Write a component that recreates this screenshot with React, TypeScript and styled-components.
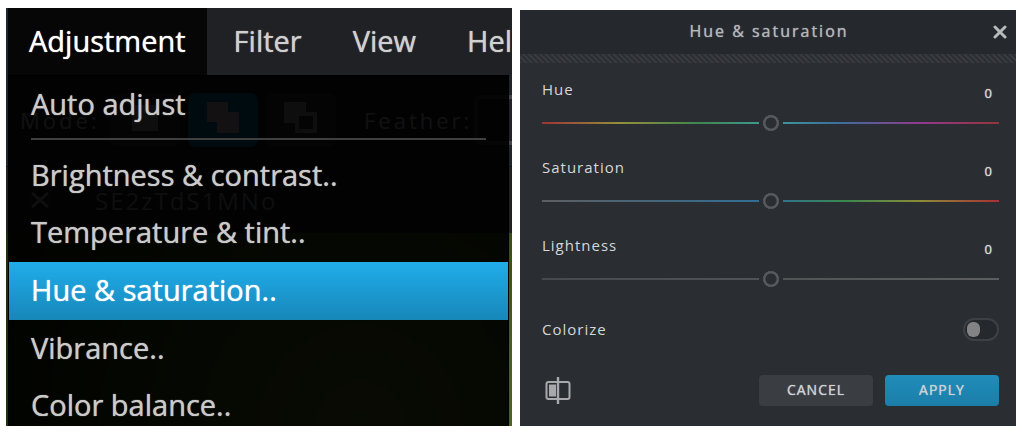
import React, { useState } from "react";
import styled, { createGlobalStyle } from "styled-components";

const GlobalStyle = createGlobalStyle`
  * { box-sizing: border-box; }
  body {
    margin: 0;
    background: #fff;
    font-family: "Open Sans", "Noto Sans", sans-serif;
  }
  button, input { font: inherit; letter-spacing: inherit; margin: 0; }
`;

const Page = styled.main`
  display: grid;
  grid-template-columns: 506fr 496fr;
  gap: 8px;
  padding: 8px 6px 6px;
`;

/* ---------- editor with the open menu ---------- */

const Editor = styled.section`
  position: relative;
  display: flex;
  flex-direction: column;
  min-width: 0;
  overflow: hidden;
  background: #20242c;
`;

const MenuBar = styled.nav`
  display: flex;
  flex: none;
  gap: 3px;
  height: 67px;
  background: #202125;
`;

const MenuTab = styled.button<{ $open?: boolean }>`
  flex: none;
  border: 0;
  border-left: ${(p) => (p.$open ? "2px solid #20242c" : "0")};
  padding: 0 ${(p) => (p.$open ? 21 : 24)}px 2px;
  font-size: 29px;
  line-height: 40px;
  white-space: nowrap;
  text-shadow: 0 0 1px currentColor;
  color: ${(p) => (p.$open ? "#fff" : "#d0d0d0")};
  background: ${(p) => (p.$open ? "#060606" : "transparent")};
`;

const ToolBar = styled.div`
  display: flex;
  align-items: center;
  flex: none;
  gap: 8px;
  height: 92px;
  padding: 0 0 2px 14px;
  border-bottom: 1px solid #14161a;
  font-size: 22px;
  letter-spacing: 3px;
  color: #d0d0d0;
  white-space: nowrap;
`;

const ToolLabel = styled.span<{ $wide?: boolean }>`
  flex: none;
  width: ${(p) => (p.$wide ? 102 : 82)}px;
  margin-left: ${(p) => (p.$wide ? 20 : 0)}px;
`;

const ModeButton = styled.button<{ $active?: boolean }>`
  display: grid;
  place-items: center;
  flex: none;
  width: 70px;
  height: 54px;
  padding: 0 0 4px;
  border: 0;
  border-radius: 8px;
  background: ${(p) => (p.$active ? "#0090c8" : "#34363c")};
`;

const FeatherInput = styled.input`
  flex: none;
  width: 90px;
  height: 50px;
  border: 4px solid #43464d;
  border-radius: 8px;
  background: #202329;
`;

const FileTab = styled.div`
  display: flex;
  align-items: center;
  flex: none;
  gap: 46px;
  height: 66px;
  padding-left: 25px;
  font-size: 24px;
  letter-spacing: 2px;
  color: #b0b0b0;
  background: #202125;
`;

const Canvas = styled.div`
  flex: 1;
  background: radial-gradient(circle at 70% 100%, #6b8a2c, #1e3008 90%);
`;

const Menu = styled.div`
  position: absolute;
  top: 67px;
  right: 3px;
  bottom: 0;
  left: 2px;
  overflow: hidden;
  border: 1px solid #000;
  border-bottom: 0;
  background: rgba(0, 0, 0, 0.92);
`;

const MenuItem = styled.button<{ $selected?: boolean }>`
  display: flex;
  align-items: center;
  width: 100%;
  height: ${(p) => (p.$selected ? 58 : 57)}px;
  margin: ${(p) => (p.$selected ? 1 : 0)}px 0 0;
  padding: 0 22px 2px;
  border: 0;
  font-size: 29px;
  line-height: 40px;
  text-align: left;
  white-space: nowrap;
  text-shadow: 0 0 1px currentColor;
  color: ${(p) => (p.$selected ? "#fff" : "#cacaca")};
  background: ${(p) =>
    p.$selected ? "linear-gradient(#20adea, #1787b9)" : "transparent"};
`;

const Separator = styled.hr`
  height: 2px;
  margin: 5px 22px 7px;
  border: 0;
  background: #404040;
`;

/* ---------- dialog ---------- */

const Dialog = styled.section`
  display: flex;
  flex-direction: column;
  min-width: 0;
  margin-top: 2px;
  background: #2a2d32;
  font-size: 15px;
  line-height: 20px;
  letter-spacing: 1px;
  color: #d6d7d8;
`;

const Header = styled.header`
  display: grid;
  grid-template-columns: 34px 1fr 32px;
  align-items: center;
  height: 44px;
  background: #25282d;
`;

const Title = styled.h2`
  grid-column: 2;
  margin: 0;
  padding-bottom: 2px;
  font-size: 16px;
  font-weight: 400;
  letter-spacing: 2px;
  text-align: center;
  text-shadow: 0 0 1px currentColor;
  color: #b4b6b8;
`;

const Close = styled.button`
  display: grid;
  place-items: center;
  height: 36px;
  padding: 0;
  border: 0;
  background: transparent;
  color: #b8b9bb;
`;

const Stripes = styled.div`
  height: 9px;
  background: repeating-linear-gradient(
    45deg,
    #393b3f 0 1px,
    #2a2d32 2px 3px,
    #393b3f 4px
  );
`;

const Body = styled.div`
  display: flex;
  flex-direction: column;
  padding: 16px 17px 20px 22px;
`;

const Field = styled.div`
  display: grid;
  grid-template-columns: 1fr auto;
  align-content: start;
  height: 78px;
`;

const Value = styled.output`
  padding: 4px 6px 0 0;
  font-size: 13px;
  text-shadow: 0 0 1px currentColor;
`;

const Slider = styled.input<{ $track: string }>`
  grid-column: 1 / -1;
  appearance: none;
  width: 100%;
  height: 16px;
  margin: 12px 0 0;
  background: ${(p) => p.$track} center / 100% 2px no-repeat;
  &::-webkit-slider-thumb {
    appearance: none;
    width: 24px;
    height: 16px;
    background: radial-gradient(
      circle,
      #2a2d32 5px,
      #56595d 6px 7px,
      #4b4e52 8px,
      #2a2d32 8px
    );
  }
`;

const SwitchRow = styled.label`
  display: flex;
  align-items: center;
  justify-content: space-between;
  height: 32px;
`;

const Switch = styled.input`
  appearance: none;
  width: 36px;
  height: 23px;
  padding: 2px;
  border: 2px solid #3d4045;
  border-radius: 12px;
  background: #25282d;
  &::before {
    content: "";
    display: block;
    width: 13px;
    height: 15px;
    border-radius: 6px;
    background: #828385;
  }
  &:checked::before {
    margin-left: auto;
  }
`;

const Footer = styled.footer`
  display: flex;
  align-items: center;
  gap: 12px;
  margin-top: 30px;
`;

const Preview = styled.button`
  display: grid;
  margin-right: auto;
  padding: 0 0 0 2px;
  border: 0;
  background: transparent;
  color: #a8a9ab;
`;

const Action = styled.button<{ $primary?: boolean }>`
  width: 114px;
  height: 31px;
  padding: 0 0 2px;
  border: 0;
  border-radius: 4px;
  font-size: 14px;
  text-shadow: 0 0 1px currentColor;
  color: #cdd2d5;
  background: ${(p) =>
    p.$primary ? "linear-gradient(#208cba, #1b7ea8)" : "#3a3d42"};
`;

const fields = [
  {
    id: "hue",
    label: "Hue",
    track:
      "linear-gradient(90deg, #a03336, #94903a 17%, #40864f 34%, #3a9c98 50%, #3c6f9c 65%, #93388f 83%, #963438)",
  },
  {
    id: "saturation",
    label: "Saturation",
    track:
      "linear-gradient(90deg, #5c5e61, #2f6f98 50%, #388850 66%, #8d8b37 83%, #a83034)",
  },
  {
    id: "lightness",
    label: "Lightness",
    track: "linear-gradient(90deg, #46494d, #5c5e61)",
  },
];

function SliderField({ id, label, track }: (typeof fields)[number]) {
  const [value, setValue] = useState(0);
  return (
    <Field>
      <label htmlFor={id}>{label}</label>
      <Value htmlFor={id}>{value}</Value>
      <Slider
        id={id}
        type="range"
        min={-100}
        max={100}
        value={value}
        $track={track}
        onChange={(e) => setValue(Number(e.target.value))}
      />
    </Field>
  );
}

export default function App() {
  return (
    <>
      <GlobalStyle />
      <Page>
        <Editor>
          <MenuBar>
            <MenuTab $open>Adjustment</MenuTab>
            <MenuTab>Filter</MenuTab>
            <MenuTab>View</MenuTab>
            <MenuTab>Help</MenuTab>
          </MenuBar>
          <ToolBar>
            <ToolLabel>Mode:</ToolLabel>
            <ModeButton aria-label="New selection">
              <svg width="26" height="26" fill="#b0b0b0">
                <path d="M0 0h26v26H0z" />
              </svg>
            </ModeButton>
            <ModeButton $active aria-label="Add to selection">
              <svg width="32" height="32" fill="#e8d8d0">
                <path d="M0 0h21v10h11v21H10V20H0z" />
              </svg>
            </ModeButton>
            <ModeButton aria-label="Subtract from selection">
              <svg width="34" height="32" fill="#b0b0b0">
                <path
                  fillRule="evenodd"
                  d="M0 0h22v10h11v21H11V21H0zM15 14v13h14V14z"
                />
              </svg>
            </ModeButton>
            <ToolLabel as="label" htmlFor="feather" $wide>
              Feather:
            </ToolLabel>
            <FeatherInput id="feather" />
          </ToolBar>
          <FileTab>
            <svg width="18" height="16" stroke="#b0b0b0" strokeWidth="3">
              <path d="M1 1l16 14M17 1L1 15" />
            </svg>
            SE2zTdS1MNo
          </FileTab>
          <Canvas />
          <Menu>
            <MenuItem>Auto adjust</MenuItem>
            <Separator />
            <MenuItem>Brightness &amp; contrast..</MenuItem>
            <MenuItem>Temperature &amp; tint..</MenuItem>
            <MenuItem $selected>Hue &amp; saturation..</MenuItem>
            <MenuItem>Vibrance..</MenuItem>
            <MenuItem>Color balance..</MenuItem>
          </Menu>
        </Editor>

        <Dialog aria-labelledby="dialog-title">
          <Header>
            <Title id="dialog-title">Hue &amp; saturation</Title>
            <Close aria-label="Close">
              <svg
                width="14"
                height="14"
                stroke="currentColor"
                strokeWidth="3"
                strokeLinecap="round"
              >
                <path d="M2 2l10 10M12 2L2 12" />
              </svg>
            </Close>
          </Header>
          <Stripes />
          <Body>
            {fields.map((f) => (
              <SliderField key={f.id} {...f} />
            ))}
            <SwitchRow>
              Colorize
              <Switch type="checkbox" />
            </SwitchRow>
            <Footer>
              <Preview aria-label="Compare before and after">
                <svg width="28" height="27" fill="none" stroke="currentColor">
                  <rect x="2.5" y="5" width="23" height="17" rx="2" strokeWidth="2" />
                  <path d="M14 0v27" strokeWidth="2.4" />
                  <path d="M5 7.5h7v12H5z" fill="currentColor" stroke="none" />
                </svg>
              </Preview>
              <Action>CANCEL</Action>
              <Action $primary>APPLY</Action>
            </Footer>
          </Body>
        </Dialog>
      </Page>
    </>
  );
}
